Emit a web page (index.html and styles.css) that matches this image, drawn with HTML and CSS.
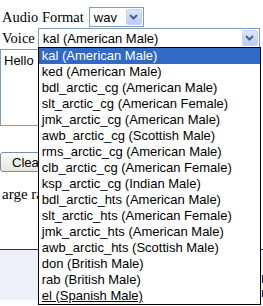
FILE: index.html
```html
<!DOCTYPE html>
<html lang="en">
<head>
    <meta charset="UTF-8">
    <title>Text to Speech</title>
    <link rel="stylesheet" href="styles.css">
</head>
<body>
    <div class="row">
        <span class="label">Audio Format</span>
        <div class="select format-select">
            <span class="value">wav</span>
            <span class="arrow"><svg width="9" height="6" viewBox="0 0 9 6"><path d="M1 1 L4.5 4.5 L8 1" fill="none" stroke="#4d6185" stroke-width="2"/></svg></span>
        </div>
    </div>
    <div class="row">
        <span class="label">Voice</span>
        <div class="select voice-select">
            <span class="value">kal (American Male)</span>
            <span class="arrow"><svg width="9" height="6" viewBox="0 0 9 6"><path d="M1 1 L4.5 4.5 L8 1" fill="none" stroke="#4d6185" stroke-width="2"/></svg></span>
            <ul class="options">
                <li class="selected">kal (American Male)</li>
                <li>ked (American Male)</li>
                <li>bdl_arctic_cg (American Male)</li>
                <li>slt_arctic_cg (American Female)</li>
                <li>jmk_arctic_cg (American Male)</li>
                <li>awb_arctic_cg (Scottish Male)</li>
                <li>rms_arctic_cg (American Male)</li>
                <li>clb_arctic_cg (American Female)</li>
                <li>ksp_arctic_cg (Indian Male)</li>
                <li>bdl_arctic_hts (American Male)</li>
                <li>slt_arctic_hts (American Female)</li>
                <li>jmk_arctic_hts (American Male)</li>
                <li>awb_arctic_hts (Scottish Male)</li>
                <li>don (British Male)</li>
                <li>rab (British Male)</li>
                <li class="last">el (Spanish Male)</li>
            </ul>
        </div>
    </div>
    <div class="text-box">Hello</div>
    <div class="btn-wrap">
        <button class="btn" type="button">Clear</button>
    </div>
    <p class="note">arge rate</p>
    <div class="footer">
        <span class="edge"></span>
    </div>
</body>
</html>
```

FILE: styles.css
```css
html, body {
    margin: 0;
    padding: 0;
    background: #fff;
    overflow: hidden;
}
body {
    box-sizing: border-box;
    font-family: "Liberation Serif", serif;
    font-size: 14.5px;
    color: #000;
    padding-top: 7px;
    height: 306px;
}
.row {
    display: flex;
    align-items: center;
    height: 20px;
    margin-bottom: 1px;
    padding-left: 2px;
}
.label {
    white-space: nowrap;
}
.select {
    position: relative;
    box-sizing: border-box;
    flex-shrink: 0;
    height: 20px;
    border: 1px solid #7f9db9;
    background: #fff;
    font-family: "Liberation Sans", Arial, sans-serif;
    font-size: 13px;
    display: flex;
    align-items: center;
}
.select .value {
    padding-left: 4px;
    flex: 1;
    white-space: nowrap;
}
.select .arrow {
    box-sizing: border-box;
    width: 16px;
    height: 16px;
    margin-right: 1px;
    border: 1px solid #c3d3fd;
    border-radius: 2px;
    background: linear-gradient(#dbe6fd, #b9cbf7);
    display: flex;
    align-items: center;
    justify-content: center;
}
.format-select {
    width: 55px;
    margin-left: 5px;
}
.voice-select {
    width: 222px;
    margin-left: 3px;
}
.options {
    position: absolute;
    top: 18px;
    left: -1px;
    width: 223px;
    box-sizing: border-box;
    margin: 0;
    padding: 0;
    list-style: none;
    border: 1px solid #000;
    background: #fff;
    z-index: 5;
}
.options li {
    height: 16px;
    line-height: 16px;
    padding-left: 3px;
    white-space: nowrap;
}
.options li.selected {
    background: #316ac5;
    color: #fff;
}
.options li.last {
    text-decoration: underline;
}
.text-box {
    box-sizing: border-box;
    width: 220px;
    height: 77px;
    border: 1px solid #7f9db9;
    font-family: "Liberation Sans", Arial, sans-serif;
    font-size: 13px;
    padding: 3px 0 0 3px;
}
.btn-wrap {
    width: 39px;
    overflow: hidden;
    margin-top: 26px;
}
.btn {
    display: block;
    height: 20px;
    width: 60px;
    padding: 0 0 0 11px;
    text-align: left;
    border: 1px solid #7b8ea6;
    border-radius: 3px;
    background: linear-gradient(#fdfdfb, #e6e5dc);
    font-family: "Liberation Sans", Arial, sans-serif;
    font-size: 13px;
    color: #000;
}
.note {
    width: 39px;
    overflow: hidden;
    margin: 14px 0 0 2px;
    white-space: nowrap;
    font-size: 15px;
}
.footer {
    display: flex;
    justify-content: flex-end;
    margin-top: 46px;
    border-top: 1px solid #333;
    background: #eef0f8;
    height: 50px;
}
.edge {
    width: 1px;
    height: 22px;
    margin-top: 25px;
    background: linear-gradient(#1c2466 0 8px, transparent 8px 15px, #1c2466 15px);
}
```
